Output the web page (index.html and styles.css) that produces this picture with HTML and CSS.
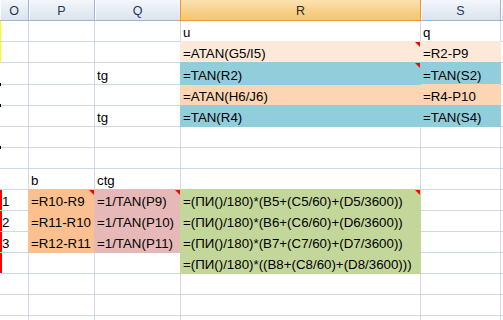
FILE: index.html
```html
<!DOCTYPE html>
<html lang="ru">
<head>
<meta charset="utf-8">
<title>Лист1</title>
<link rel="stylesheet" href="styles.css">
</head>
<body>
<div class="sheet">
  <div class="col-heads">
    <div class="ch">O</div>
    <div class="ch">P</div>
    <div class="ch">Q</div>
    <div class="ch ch-active">R</div>
    <div class="ch">S</div>
    <div class="ch"></div>
  </div>
  <div class="cells">
    <!-- row 1 -->
    <div class="c mark-yellow"></div><div class="c"></div><div class="c"></div><div class="c">u</div><div class="c">q</div><div class="c"></div>
    <!-- row 2 -->
    <div class="c mark-yellow"></div><div class="c"></div><div class="c"></div><div class="c fill-peach note">=ATAN(G5/I5)</div><div class="c fill-peach">=R2-P9</div><div class="c"></div>
    <!-- row 3 -->
    <div class="c"></div><div class="c"></div><div class="c">tg</div><div class="c fill-blue note">=TAN(R2)</div><div class="c fill-blue">=TAN(S2)</div><div class="c"></div>
    <!-- row 4 -->
    <div class="c tick"></div><div class="c"></div><div class="c"></div><div class="c fill-apricot">=ATAN(H6/J6)</div><div class="c fill-apricot">=R4-P10</div><div class="c"></div>
    <!-- row 5 -->
    <div class="c tick"></div><div class="c"></div><div class="c">tg</div><div class="c fill-blue">=TAN(R4)</div><div class="c fill-blue">=TAN(S4)</div><div class="c"></div>
    <!-- row 6 -->
    <div class="c"></div><div class="c"></div><div class="c"></div><div class="c"></div><div class="c"></div><div class="c"></div>
    <!-- row 7 -->
    <div class="c tick"></div><div class="c"></div><div class="c"></div><div class="c"></div><div class="c"></div><div class="c"></div>
    <!-- row 8 -->
    <div class="c"></div><div class="c">b</div><div class="c">ctg</div><div class="c"></div><div class="c"></div><div class="c"></div>
    <!-- row 9 -->
    <div class="c mark-red">1</div><div class="c fill-orange note">=R10-R9</div><div class="c fill-pink note">=1/TAN(P9)</div><div class="c fill-green note">=(ПИ()/180)*(B5+(C5/60)+(D5/3600))</div><div class="c"></div><div class="c"></div>
    <!-- row 10 -->
    <div class="c mark-red">2</div><div class="c fill-orange">=R11-R10</div><div class="c fill-pink">=1/TAN(P10)</div><div class="c fill-green">=(ПИ()/180)*(B6+(C6/60)+(D6/3600))</div><div class="c"></div><div class="c"></div>
    <!-- row 11 -->
    <div class="c mark-red">3</div><div class="c fill-orange">=R12-R11</div><div class="c fill-pink">=1/TAN(P11)</div><div class="c fill-green">=(ПИ()/180)*(B7+(C7/60)+(D7/3600))</div><div class="c"></div><div class="c"></div>
    <!-- row 12 -->
    <div class="c mark-red"></div><div class="c"></div><div class="c"></div><div class="c fill-green">=(ПИ()/180)*((B8+(C8/60)+(D8/3600)))</div><div class="c"></div><div class="c"></div>
    <!-- row 13 -->
    <div class="c"></div><div class="c"></div><div class="c"></div><div class="c"></div><div class="c"></div><div class="c"></div>
    <!-- row 14 -->
    <div class="c"></div><div class="c"></div><div class="c"></div><div class="c"></div><div class="c"></div><div class="c"></div>
    <!-- row 15 -->
    <div class="c"></div><div class="c"></div><div class="c"></div><div class="c"></div><div class="c"></div><div class="c"></div>
  </div>
</div>
</body>
</html>
```
FILE: styles.css
```css
html, body {
  margin: 0;
  padding: 0;
  background: #fff;
}

body {
  width: 503px;
  height: 320px;
  overflow: hidden;
  font-family: "Liberation Sans", Arial, sans-serif;
}

.sheet {
  width: 503px;
  height: 320px;
  overflow: hidden;
}

/* column header strip */
.col-heads {
  display: grid;
  grid-template-columns: 28px 65px 85px 239px 79px 1fr;
  grid-template-rows: 20px;
  column-gap: 1px;
  padding-bottom: 1px;
  background: #9eb6ce;
}

.ch {
  background: linear-gradient(to bottom, #f4f7fb 0%, #e6ecf4 55%, #dbe3ee 100%);
  box-shadow: inset 1px 0 0 #fbfcfe;
  color: #1f3656;
  font-size: 12.5px;
  line-height: 20px;
  text-align: center;
  padding-top: 1px;
  box-sizing: border-box;
}

.ch-active {
  background: linear-gradient(to bottom, #fbe2b0 0%, #f8d28e 50%, #f5c572 100%);
  box-shadow: 0 0 0 1px #f29536;
  color: #2b2b2b;
}

/* cell grid */
.cells {
  display: grid;
  grid-template-columns: 28px 65px 85px 239px 79px 1fr;
  grid-template-rows: 20px 20px 21px repeat(12, 20px);
  gap: 1px;
  background: #d0d7e5;
}

.c {
  background: #fff;
  display: flex;
  align-items: flex-end;
  padding: 0 2px;
  font-size: 13.3px;
  line-height: 16px;
  color: #000;
  white-space: nowrap;
  min-width: 0;
}

/* fills hide the surrounding gridlines */
.fill-peach   { background: #fde9d9; box-shadow: 0 0 0 1px #fde9d9; }
.fill-apricot { background: #fcd5b4; box-shadow: 0 0 0 1px #fcd5b4; }
.fill-blue    { background: #92cddc; box-shadow: 0 0 0 1px #92cddc; }
.fill-orange  { background: #fac090; box-shadow: 0 0 0 1px #fac090; }
.fill-pink    { background: #e6b9b8; box-shadow: 0 0 0 1px #e6b9b8; }
.fill-green   { background: #c4d79b; box-shadow: 0 0 0 1px #c4d79b; }

/* left-edge border marks */
.mark-yellow { box-shadow: inset 1px 0 0 #ffff00; }
.mark-red    { box-shadow: inset 2px 0 0 #ff0000; }

/* small dark notch on the left edge, sitting on the gridline above */
.tick {
  position: relative;
}

.tick::before {
  content: "";
  position: absolute;
  left: 0;
  top: -2px;
  width: 1px;
  height: 3px;
  background: #000;
}

/* comment indicator */
.note {
  position: relative;
}

.note::after {
  content: "";
  position: absolute;
  top: 0;
  right: 0;
  width: 0;
  height: 0;
  border-style: solid;
  border-width: 0 5px 5px 0;
  border-color: transparent #ff0000 transparent transparent;
}
```
